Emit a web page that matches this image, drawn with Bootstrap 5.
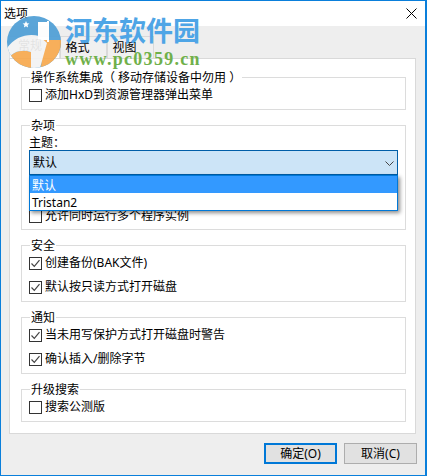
<!DOCTYPE html>
<html lang="zh-CN">
<head>
  <meta charset="UTF-8">
  <title>选项</title>
  <meta name="viewport" content="width=device-width, initial-scale=1">
  <link rel="stylesheet" href="https://cdn.jsdelivr.net/npm/bootstrap@5.3.0/dist/css/bootstrap.min.css">
  <style>
    html, body {
      margin: 0;
      height: 100%;
      background: #f0f0f0;
      font-family: "Noto Sans", "Noto Sans CJK SC", sans-serif;
      font-size: 12px;
      line-height: 14px;
      color: #000;
    }
    /* dialog frame */
    .dlg {
      width: 427px;
      height: 476px;
      background: #eeeeee;
      border: 1px solid #0a7fdb;
      border-width: 1px 2px 1px 1px;
      overflow: hidden;
    }
    .dlg-title {
      height: 25px;
      background: #fff;
      padding: 6px 0 0 3px;
    }
    .close-x { margin: 1px 8px 0 0; }
    /* tabs */
    .nav-tabs.opt-tabs {
      height: 32px;
      margin: 0 0 0 8px;
      padding-top: 10px;
      border: 0;
      gap: 0;
    }
    .opt-tabs .nav-link {
      width: 47px;
      height: 22px;
      padding: 4px 0 0 4.5px;
      margin: 0;
      font-size: 12px;
      color: #000;
      background: #f0f0f0;
      border: 1px solid #d9d9d9;
      border-bottom: 0;
      border-radius: 0;
    }
    .opt-tabs .nav-link.active {
      width: 51px;
      padding: 2px 0 0 8px;
      background: #fff;
      color: #000;
    }
    /* tab page */
    .tab-page {
      width: 407px;
      height: 376px;
      margin-left: 8px;
      padding: 18px 10px 0 11px;
      background: #fff;
      border: 1px solid #d9d9d9;
    }
    .grp {
      width: 385px;
      margin-bottom: 15px;
      padding: 11px 7px 7px 7px;
      border: 1px solid #dcdcdc;
    }
    .grp-misc { height: 105px; padding-top: 10px; }
    .grp-title {
      display: block;
      width: fit-content;
      height: 14px;
      margin: -18px 0 4px 1px;
      padding: 0 1px;
      background: #fff;
    }
    .grp-misc .grp-title { margin-top: -17px; margin-bottom: 2px; }
    .colon-mark { font-family: "Noto Sans CJK TC", sans-serif; }
    .opt-line { height: 13px; gap: 3px; margin: 0; }
    .opt-line + .opt-line { margin-top: 11px; }
    .opt-line label { line-height: 11px; height: 13px; }
    .opt-line .form-check-input {
      width: 13px;
      height: 13px;
      margin: 0;
      flex: none;
      background-color: #fff;
      border: 1px solid #333;
      border-radius: 0;
      box-shadow: none;
    }
    .opt-line .form-check-input:checked {
      background-color: #fff;
      border-color: #333;
      background-size: 11px 11px;
      background-image: url("data:image/svg+xml,%3Csvg xmlns='http://www.w3.org/2000/svg' viewBox='0 0 11 11'%3E%3Cpath d='M1.5 5.5l2.8 2.8 5.2-6.2' fill='none' stroke='%23444' stroke-width='1.2'/%3E%3C/svg%3E");
    }
    /* combo */
    .combo-wrap { position: relative; height: 75px; }
    .combo-box {
      height: 25px;
      padding: 1px 3px 0 3px;
      background: #cce4f7;
      border: 1px solid #005ea8;
    }
    .combo-list {
      position: absolute;
      top: 40px;
      left: 0;
      right: 0;
      z-index: 5;
      height: 36px;
      background: #fff;
      border: 1px solid #0078d7;
      box-shadow: 2px 2px 4px rgba(0, 0, 0, .45);
    }
    .combo-list div { height: 17px; line-height: 19px; padding-left: 2px; }
    .combo-list .sel { background: #3399ff; color: #fff; }
    .theme-label { height: 15px; }
    /* buttons */
    .foot { gap: 7px; padding: 9px 8px 0 0; }
    .btn.dlg-btn {
      width: 73px;
      height: 21px;
      padding: 0;
      font-size: 12px;
      line-height: 17px;
      color: #000;
      background: #e1e1e1;
      border: 1px solid #adadad;
      border-radius: 0;
    }
    .btn.dlg-btn.is-default { border: 2px solid #0078d7; }
    /* watermark over the dialog */
    .wm-logo { position: absolute; left: 7px; top: 16px; opacity: .93; pointer-events: none; }
    .wm-name {
      position: absolute;
      left: 65px;
      top: 14px;
      font-size: 27px;
      line-height: 34px;
      font-weight: 700;
      color: #4ea5e6;
      pointer-events: none;
    }
    .wm-url {
      position: absolute;
      left: 65px;
      top: 49px;
      font-family: "Liberation Serif", serif;
      font-size: 18px;
      line-height: 20px;
      font-weight: 700;
      letter-spacing: 1.3px;
      color: #6fb04a;
      pointer-events: none;
    }
  </style>
</head>
<body>
  <div class="dlg d-flex flex-column">
    <div class="dlg-title d-flex justify-content-between">
      <span>选项</span>
      <svg class="close-x" width="11" height="11" viewBox="0 0 11 11"><path d="M.5.5l10 10M10.500.5l-10 10" stroke="#000" fill="none"/></svg>
    </div>

    <ul class="nav nav-tabs opt-tabs">
      <li class="nav-item"><a class="nav-link active" href="#">常规</a></li>
      <li class="nav-item"><a class="nav-link" href="#">格式</a></li>
      <li class="nav-item"><a class="nav-link" href="#">视图</a></li>
    </ul>

    <div class="tab-page">
      <div class="grp">
        <span class="grp-title">操作系统集成（ 移动存储设备中勿用 ）</span>
        <div class="opt-line d-flex align-items-center">
          <input class="form-check-input" type="checkbox" id="c1">
          <label for="c1">添加HxD到资源管理器弹出菜单</label>
        </div>
      </div>

      <div class="grp grp-misc">
        <span class="grp-title">杂项</span>
        <div class="combo-wrap">
          <div class="theme-label">主题<span class="colon-mark">：</span></div>
          <div class="combo-box d-flex align-items-center justify-content-between">
            <span>默认</span>
            <svg width="9" height="5" viewBox="0 0 9 5"><path d="M.5.5l4 4 4-4" stroke="#444" fill="none"/></svg>
          </div>
          <div class="combo-list">
            <div class="sel">默认</div>
            <div>Tristan2</div>
          </div>
        </div>
        <div class="opt-line d-flex align-items-center">
          <input class="form-check-input" type="checkbox" id="c2">
          <label for="c2">允许同时运行多个程序实例</label>
        </div>
      </div>

      <div class="grp">
        <span class="grp-title">安全</span>
        <div class="opt-line d-flex align-items-center">
          <input class="form-check-input" type="checkbox" id="c3" checked>
          <label for="c3">创建备份(BAK文件)</label>
        </div>
        <div class="opt-line d-flex align-items-center">
          <input class="form-check-input" type="checkbox" id="c4" checked>
          <label for="c4">默认按只读方式打开磁盘</label>
        </div>
      </div>

      <div class="grp">
        <span class="grp-title">通知</span>
        <div class="opt-line d-flex align-items-center">
          <input class="form-check-input" type="checkbox" id="c5" checked>
          <label for="c5">当未用写保护方式打开磁盘时警告</label>
        </div>
        <div class="opt-line d-flex align-items-center">
          <input class="form-check-input" type="checkbox" id="c6" checked>
          <label for="c6">确认插入/删除字节</label>
        </div>
      </div>

      <div class="grp">
        <span class="grp-title">升级搜索</span>
        <div class="opt-line d-flex align-items-center">
          <input class="form-check-input" type="checkbox" id="c7">
          <label for="c7">搜索公测版</label>
        </div>
      </div>
    </div>

    <div class="foot d-flex justify-content-end">
      <button type="button" class="btn dlg-btn is-default">确定(O)</button>
      <button type="button" class="btn dlg-btn">取消(C)</button>
    </div>
  </div>

  <!-- site watermark -->
  <svg class="wm-logo" width="54" height="52" viewBox="0 0 54 52">
    <defs><clipPath id="disc"><ellipse cx="27" cy="26" rx="27" ry="26"/></clipPath></defs>
    <g clip-path="url(#disc)">
      <rect width="54" height="52" fill="#4f9fd6"/>
      <path d="M36 24H54V52H34Z" fill="#f7a94f"/>
      <path d="M2 42C6 36 14 33 24 36V52H0Z" fill="#f7a94f"/>
      <path d="M0 32C8 20 22 17 32 20L40 27L33 52H24V36C14 33 6 36 2 42Z" fill="#f3f3f3"/>
      <path d="M31 6H40V24H31Z" fill="#fff"/>
      <path d="M41 5V26" stroke="#fff" stroke-width="2" fill="none"/>
      <path d="M19 5l1 2.200 2.400.3-1.800 1.600.5 2.400-2.100-1.200-2.100 1.200.5-2.400-1.800-1.600 2.400-.3z" fill="#fff"/>
    </g>
  </svg>
  <div class="wm-name">河东软件园</div>
  <div class="wm-url">www.pc0359.cn</div>

  <script src="https://cdn.jsdelivr.net/npm/bootstrap@5.3.0/dist/js/bootstrap.bundle.min.js"></script>
</body>
</html>
